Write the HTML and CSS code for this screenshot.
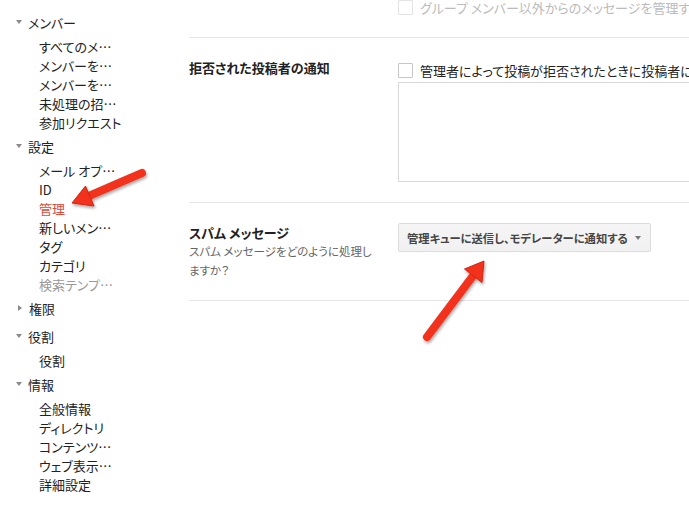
FILE: index.html
```html
<!DOCTYPE html>
<html lang="ja">
<head>
  <meta charset="UTF-8">
  <title>グループ設定 - 管理</title>
  <link rel="stylesheet" href="styles.css">
</head>
<body>
  <div class="page">
    <nav class="sidebar">
      <div class="section">
        <div class="section-title"><span class="caret"></span>メンバー</div>
        <a class="nav-item">すべてのメ…</a>
        <a class="nav-item">メンバーを…</a>
        <a class="nav-item">メンバーを…</a>
        <a class="nav-item">未処理の招…</a>
        <a class="nav-item">参加リクエスト</a>
      </div>
      <div class="section">
        <div class="section-title"><span class="caret"></span>設定</div>
        <a class="nav-item">メール オプ…</a>
        <a class="nav-item">ID</a>
        <a class="nav-item active">管理</a>
        <a class="nav-item">新しいメン…</a>
        <a class="nav-item">タグ</a>
        <a class="nav-item">カテゴリ</a>
        <a class="nav-item disabled">検索テンプ…</a>
      </div>
      <div class="section collapsed">
        <div class="section-title"><span class="caret"></span>権限</div>
      </div>
      <div class="section">
        <div class="section-title"><span class="caret"></span>役割</div>
        <a class="nav-item">役割</a>
      </div>
      <div class="section">
        <div class="section-title"><span class="caret"></span>情報</div>
        <a class="nav-item">全般情報</a>
        <a class="nav-item">ディレクトリ</a>
        <a class="nav-item">コンテンツ…</a>
        <a class="nav-item">ウェブ表示…</a>
        <a class="nav-item">詳細設定</a>
      </div>
    </nav>

    <main class="content">
      <div class="row first">
        <div class="label"></div>
        <div class="value">
          <label class="check disabled"><span class="box"></span>グループ メンバー以外からのメッセージを管理する</label>
        </div>
      </div>

      <div class="row">
        <div class="label">
          <div class="label-title">拒否された投稿者の通知</div>
        </div>
        <div class="value">
          <label class="check"><span class="box"></span>管理者によって投稿が拒否されたときに投稿者に通知する</label>
          <textarea class="message"></textarea>
        </div>
      </div>

      <div class="row">
        <div class="label">
          <div class="label-title">スパム メッセージ</div>
          <div class="label-desc">スパム メッセージをどのように処理しますか？</div>
        </div>
        <div class="value">
          <button class="dropdown">管理キューに送信し、モデレーターに通知する<span class="dropdown-caret"></span></button>
        </div>
      </div>
    </main>
  </div>

  <svg class="callouts" width="689" height="515" viewBox="0 0 689 515">
    <defs>
      <filter id="shadow" x="-20%" y="-20%" width="140%" height="140%">
        <feDropShadow dx="1" dy="2" stdDeviation="1.6" flood-color="#000" flood-opacity="0.35"/>
      </filter>
    </defs>
    <g filter="url(#shadow)" fill="#f2321b" stroke="#d42412" stroke-width="1" stroke-linejoin="round">
      <line x1="142" y1="173" x2="90" y2="195.5" stroke="#f2321b" stroke-width="8" stroke-linecap="round"/>
      <polygon points="72,203 94,206 85.5,186"/>
      <line x1="427" y1="337" x2="474" y2="274.5" stroke="#f2321b" stroke-width="8" stroke-linecap="round"/>
      <polygon points="484,261 482,282.5 464.5,269"/>
    </g>
  </svg>
</body>
</html>
```

FILE: styles.css
```css
:root {
  --text: #222;
  --muted: #666;
  --faint: #bbb;
  --line: #e5e5e5;
  --red: #dd4b39;
}

html, body {
  margin: 0;
  height: 100%;
  overflow: hidden;
}

body {
  font-family: "Noto Sans CJK JP", "Noto Sans", sans-serif;
  font-feature-settings: "palt";
  font-size: 13px;
  color: var(--text);
  background: #fff;
  position: relative;
}

.page {
  display: flex;
}

/* left nav */
.sidebar {
  width: 170px;
  flex: none;
  padding-top: 12.5px;
}

.section {
  margin-bottom: 5px;
}

.section-title {
  display: flex;
  align-items: center;
  height: 19px;
  line-height: 19px;
  padding-left: 16px;
  margin-bottom: 5px;
}

.caret {
  width: 0;
  height: 0;
  border-left: 3.5px solid transparent;
  border-right: 3.5px solid transparent;
  border-top: 4px solid #8a8a8a;
  margin-right: 6px;
}

.section.collapsed {
  margin-bottom: 9px;
}

.collapsed .section-title {
  margin-bottom: 0;
}

.collapsed .caret {
  border-top: 3.5px solid transparent;
  border-bottom: 3.5px solid transparent;
  border-left: 4px solid #8a8a8a;
  border-right: 0;
  margin-left: 2px;
  margin-right: 7px;
}

.nav-item {
  display: block;
  line-height: 19px;
  padding-left: 39px;
  white-space: nowrap;
  cursor: pointer;
}

.nav-item.active { color: var(--red); }
.nav-item.disabled { color: #999; }

/* settings rows */
.content {
  flex: 1;
  min-width: 0;
  padding-left: 19px;
  overflow: hidden;
}

.row {
  display: grid;
  grid-template-columns: 209px 1fr;
  padding: 20px 0;
  border-bottom: 1px solid var(--line);
}

.row.first {
  padding-top: 0;
}

.label {
  max-width: 186px;
}

.label-title {
  font-weight: bold;
  line-height: 19px;
}

.label-desc {
  font-size: 11.5px;
  line-height: 19px;
  color: var(--muted);
}

.value {
  min-width: 0;
  white-space: nowrap;
}

.check {
  display: flex;
  align-items: center;
  line-height: 19px;
  margin-top: 3px;
}

.row.first .check {
  margin-top: -2px;
}

.box {
  width: 13px;
  height: 13px;
  border: 1px solid #c6c6c6;
  border-radius: 1px;
  margin-right: 7px;
  flex: none;
}

.check.disabled {
  color: var(--faint);
}

.check.disabled .box {
  border-color: #e3e3e3;
}

.message {
  display: block;
  box-sizing: border-box;
  width: 420px;
  height: 100px;
  margin: 2px 0 0;
  border: 1px solid #d9d9d9;
  border-radius: 0;
  resize: none;
  font: inherit;
}

.dropdown {
  display: inline-flex;
  align-items: center;
  box-sizing: border-box;
  height: 29px;
  padding: 0 9px 0 8px;
  border: 1px solid #dcdcdc;
  border-radius: 2px;
  background: linear-gradient(#f5f5f5, #f1f1f1);
  font-family: inherit;
  font-feature-settings: "palt";
  font-size: 11.3px;
  font-weight: bold;
  color: #444;
  cursor: pointer;
}

.dropdown-caret {
  width: 0;
  height: 0;
  border-left: 3.5px solid transparent;
  border-right: 3.5px solid transparent;
  border-top: 4px solid #777;
  margin-left: 7px;
}

/* annotation arrows over the screenshot */
.callouts {
  position: absolute;
  top: 0;
  left: 0;
  pointer-events: none;
}
```
